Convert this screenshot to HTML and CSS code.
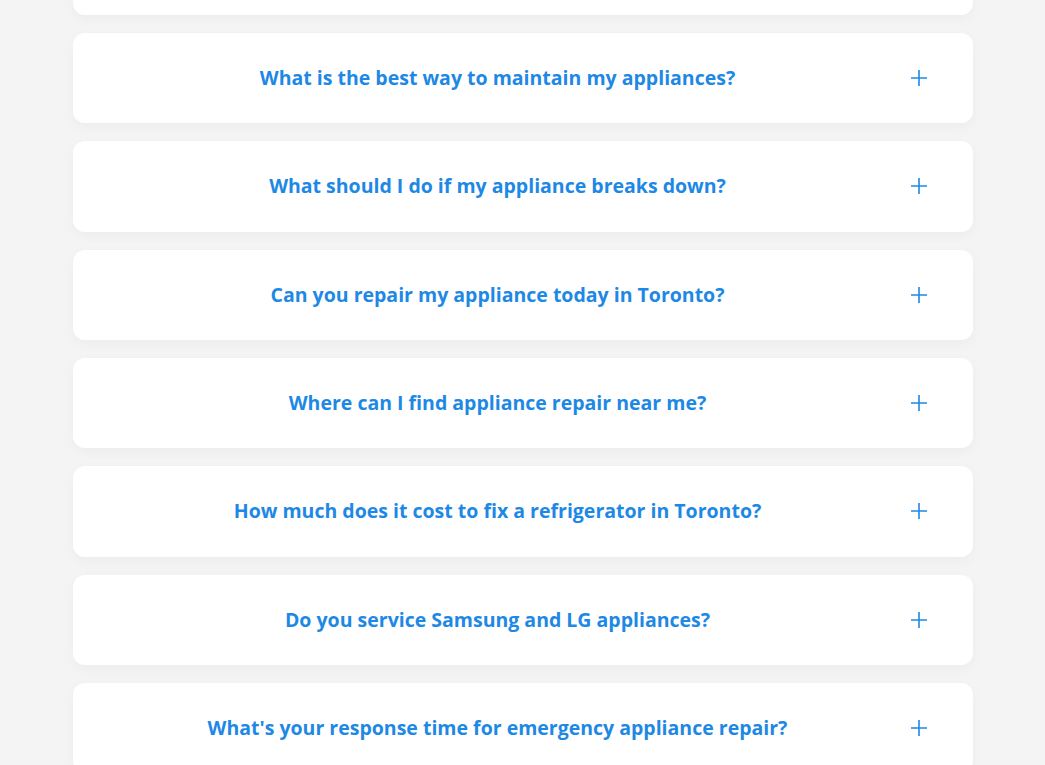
FILE: index.html
```html
<!DOCTYPE html>
<html lang="en">
<head>
<meta charset="utf-8">
<title>FAQ</title>
<link rel="stylesheet" href="styles.css">
</head>
<body>
<section class="faq">
  <div class="faq-list">
    <div class="faq-item faq-item-partial"></div>
    <div class="faq-item"><span class="faq-q">What is the best way to maintain my appliances?</span><svg class="faq-icon" viewBox="0 0 18 18"><path d="M9 1v16M1 9h16"/></svg></div>
    <div class="faq-item"><span class="faq-q">What should I do if my appliance breaks down?</span><svg class="faq-icon" viewBox="0 0 18 18"><path d="M9 1v16M1 9h16"/></svg></div>
    <div class="faq-item"><span class="faq-q">Can you repair my appliance today in Toronto?</span><svg class="faq-icon" viewBox="0 0 18 18"><path d="M9 1v16M1 9h16"/></svg></div>
    <div class="faq-item"><span class="faq-q">Where can I find appliance repair near me?</span><svg class="faq-icon" viewBox="0 0 18 18"><path d="M9 1v16M1 9h16"/></svg></div>
    <div class="faq-item"><span class="faq-q">How much does it cost to fix a refrigerator in Toronto?</span><svg class="faq-icon" viewBox="0 0 18 18"><path d="M9 1v16M1 9h16"/></svg></div>
    <div class="faq-item"><span class="faq-q">Do you service Samsung and LG appliances?</span><svg class="faq-icon" viewBox="0 0 18 18"><path d="M9 1v16M1 9h16"/></svg></div>
    <div class="faq-item"><span class="faq-q">What's your response time for emergency appliance repair?</span><svg class="faq-icon" viewBox="0 0 18 18"><path d="M9 1v16M1 9h16"/></svg></div>
  </div>
</section>
</body>
</html>
```
FILE: styles.css
```css
html, body {
  margin: 0;
  padding: 0;
  background: #f4f4f4;
  overflow: hidden;
}
body {
  font-family: "Open Sans", "Liberation Sans", sans-serif;
}
.faq {
  width: 900px;
  margin: 0 auto;
}
.faq-list {
  display: flex;
  flex-direction: column;
  gap: 18px;
  margin-top: -75.33px;
}
.faq-item {
  display: flex;
  align-items: center;
  gap: 32px;
  height: 90.33px;
  padding: 0 45px;
  box-sizing: border-box;
  background: #ffffff;
  border-radius: 12px;
  box-shadow: 0 4px 14px rgba(0, 0, 0, 0.035);
}
.faq-q {
  flex: 1;
  text-align: center;
  color: #1e88e5;
  font-size: 19.5px;
  font-weight: 700;
  line-height: 26px;
}
.faq-icon {
  width: 18px;
  height: 18px;
  flex: none;
  stroke: #1e88e5;
  stroke-width: 1.6;
  fill: none;
}
```
